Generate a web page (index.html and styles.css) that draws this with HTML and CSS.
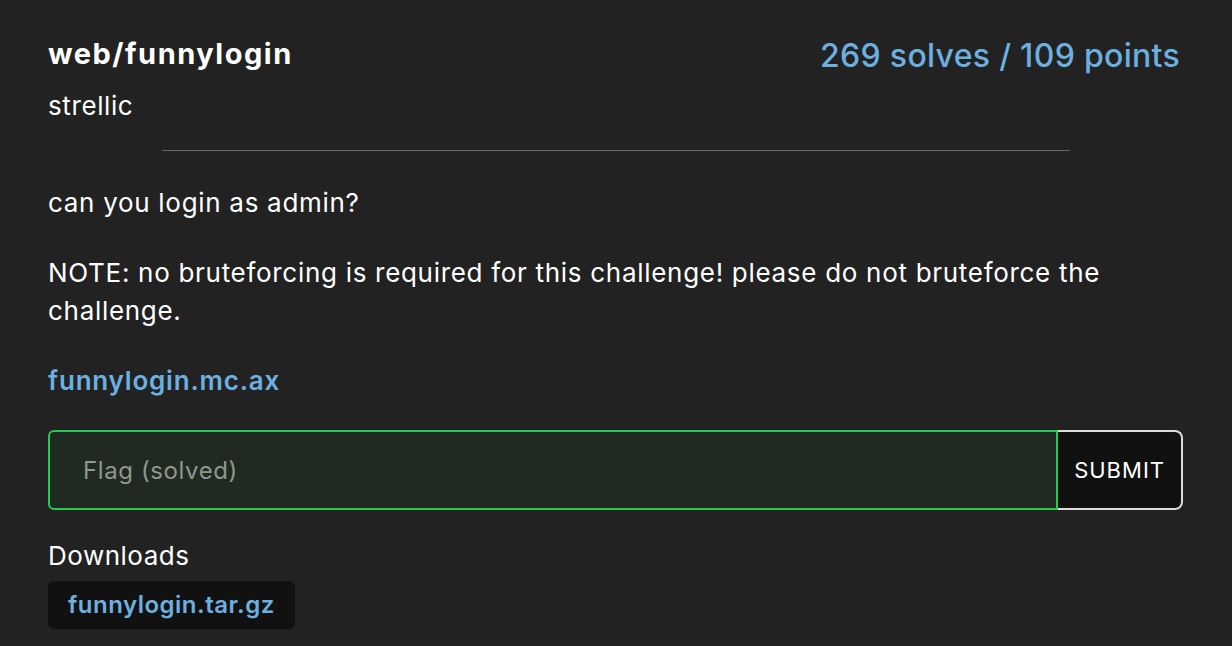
FILE: index.html
```html
<!DOCTYPE html>
<html>
<head>
<meta charset="utf-8">
<link rel="stylesheet" href="styles.css">
</head>
<body>
<div class="card">
  <div class="header">
    <div class="titles">
      <div class="title">web/funnylogin</div>
      <div class="author">strellic</div>
    </div>
    <div class="stats">269 solves / 109 points</div>
  </div>
  <hr class="divider">
  <div class="desc">
    <p>can you login as admin?</p>
    <p>NOTE: no bruteforcing is required for this challenge! please do not bruteforce the challenge.</p>
    <p><a class="link" href="#">funnylogin.mc.ax</a></p>
  </div>
  <form class="flag-form">
    <input class="flag-input" type="text" placeholder="Flag (solved)">
    <button class="submit" type="button">SUBMIT</button>
  </form>
  <div class="downloads-label">Downloads</div>
  <div class="downloads">
    <a class="file" href="#">funnylogin.tar.gz</a>
  </div>
</div>
</body>
</html>
```
FILE: styles.css
```css
html, body {
  margin: 0;
  padding: 0;
  background: #222222;
}
body {
  font-family: Inter, "Noto Sans", sans-serif;
  color: #ffffff;
}
.card {
  background: #222222;
  padding: 36px 48px 16px 48px;
  min-height: 646px;
  box-sizing: border-box;
  border-radius: 6px;
}
.header {
  display: flex;
  justify-content: space-between;
  align-items: flex-start;
}
.title {
  font-size: 29px;
  font-weight: 700;
  line-height: 36px;
  letter-spacing: 1.5px;
}
.author {
  font-size: 26px;
  line-height: 32px;
  margin-top: 18px;
  letter-spacing: 0.6px;
}
.stats {
  font-size: 32px;
  font-weight: 500;
  color: #6cb0e0;
  line-height: 40px;
  margin-right: 4px;
  letter-spacing: 0.3px;
}
.divider {
  border: 0;
  border-top: 1px solid #6a6a6a;
  width: 80%;
  margin: 28px auto 33px auto;
}
.desc {
  font-size: 26px;
  line-height: 38px;
  letter-spacing: 0.7px;
}
.desc p {
  margin: 0 0 32px 0;
}
.desc p:last-child {
  margin-bottom: 0;
}
.link {
  color: #6cb0e0;
  font-weight: 600;
  text-decoration: none;
  letter-spacing: 0.8px;
}
.flag-form {
  display: flex;
  margin-top: 30px;
  height: 80px;
}
.flag-input {
  flex: 1;
  min-width: 0;
  background: #212a21;
  border: 2px solid #22cc55;
  border-radius: 6px 0 0 6px;
  padding: 0 33px;
  font-family: inherit;
  font-size: 24px;
  letter-spacing: 0.6px;
  color: #fff;
  outline: none;
}
.flag-input::placeholder {
  color: #8f978f;
}
.submit {
  background: #111111;
  border: 2px solid #dddddd;
  border-left: 0;
  border-radius: 0 8px 8px 0;
  color: #ffffff;
  font-family: inherit;
  font-size: 22px;
  letter-spacing: 1px;
  padding: 0 16px 0 16px;
  margin-right: 1px;
}
.downloads-label {
  font-size: 26px;
  line-height: 32px;
  margin-top: 30px;
  letter-spacing: 0.5px;
}
.downloads {
  display: flex;
  margin-top: 9px;
}
.file {
  background: #111111;
  border-radius: 6px;
  color: #6cb0e0;
  font-weight: 600;
  font-size: 24px;
  letter-spacing: 0.5px;
  text-decoration: none;
  padding: 10px 20px;
  line-height: 28px;
}
```
